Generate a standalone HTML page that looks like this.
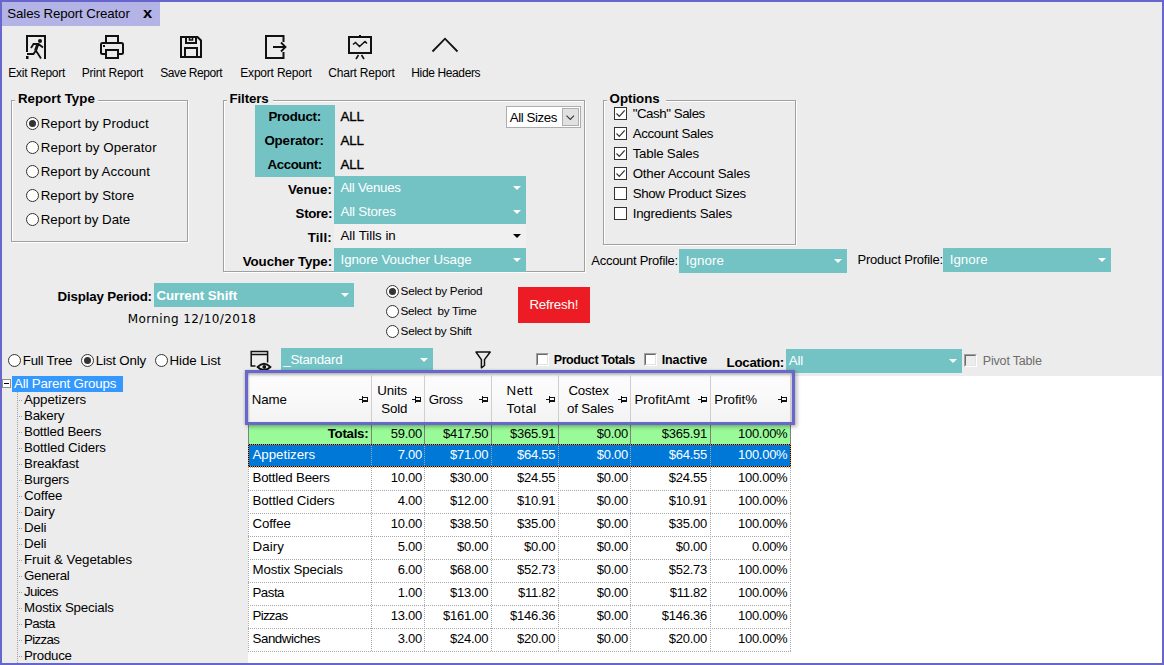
<!DOCTYPE html>
<html><head><meta charset="utf-8"><title>Sales Report Creator</title>
<style>
*{box-sizing:border-box;margin:0;padding:0}
html,body{width:1164px;height:665px;overflow:hidden;background:#ececec}
body{font-family:"Liberation Sans",sans-serif;font-size:13.3px;color:#000;position:relative}
.a{position:absolute;white-space:nowrap}
.t{position:absolute;white-space:nowrap;line-height:16px;height:16px}
.b{font-weight:bold}
.w{color:#fff}
.teal{background:#73c3c5}
.gbw{position:absolute;border:1px solid #fff}
.gb{position:absolute;border:1px solid #a0a0a0}
.lg{position:absolute;background:#ececec;height:16px}
.rd{position:absolute;width:13px;height:13px;border:1px solid #333;border-radius:50%;background:#fff}
.rd.on::after{content:"";position:absolute;left:2px;top:2px;width:7px;height:7px;border-radius:50%;background:#333}
.cb{position:absolute;width:13px;height:13px;border:1px solid #333;background:#fff}
.dd{position:absolute;background:#73c3c5}
.dd.k{background:#f0f0f0}
.ar{position:absolute;width:0;height:0;border-left:4px solid transparent;border-right:4px solid transparent;border-top:4px solid #fff}
.ar.k{border-top-color:#000}
.hl{height:0;border-top:1px dotted #a8a8a8}
.vl{width:0;border-left:1px dotted #a8a8a8}
</style></head><body>
<div class="a" style="left:2px;top:2px;width:158px;height:24px;background:#b3b3e6"></div>
<div class="t" style="left:7.3px;top:6px;letter-spacing:-0.125px;">Sales Report Creator</div>
<div class="t b" style="left:142.7px;top:5px;font-size:14px;letter-spacing:-0.270px;transform:scaleX(1.18);transform-origin:0 0;">x</div>
<svg class="a" style="left:0;top:28px" width="500" height="40" viewBox="0 28 500 40" fill="none" stroke="#111" stroke-width="2">
<path d="M27 52V36H45V59"/><path d="M26 57.500H28.500" stroke-width="3"/>
<circle cx="40" cy="41" r="2" fill="#111" stroke="none"/>
<path d="M31 48L33.500 44H38.500L43 47.500M38.500 44L36 51L37.500 53L41 58.500M35.500 51L33.500 54H27" stroke-width="1.8"/><path d="M37 44.500L34.800 50.500" stroke-width="1.6"/>
<path d="M106 42V36H118V42M106 54H102.500Q101 54 101 52.500V44.500Q101 43 102.500 43H121.500Q123 43 123 44.500V52.500Q123 54 121.500 54H118"/>
<rect x="106" y="50" width="12" height="8"/>
<rect x="103" y="45" width="2" height="2" fill="#111" stroke="none"/>
<path d="M181 37H197.500L201 40.500V57H181Z"/>
<path d="M186 37V43H196V37"/><path d="M189.500 37V40H192.500V37" stroke-width="1.6"/>
<path d="M185 57V48H197V57"/>
<path d="M283.500 42V36H266V58H283.500V52"/>
<path d="M273 47H285M281 42.500L285.500 47L281 51.500" stroke-width="1.8"/>
<rect x="349" y="37" width="22" height="16"/>
<path d="M360 35V37" /><path d="M358.500 55L356 59M361.500 55L364 59" stroke-width="1.6"/>
<path d="M353 44.500L355.500 42.500L359.500 46.500L365 41.500L367 43.500" stroke-width="1.6"/>
<path d="M432.500 51.500L445 38.700L457.500 51.500" stroke-width="1.8"/>
</svg>
<div class="t" style="left:8.3px;top:65px;font-size:12px;letter-spacing:-0.224px;">Exit Report</div>
<div class="t" style="left:81.8px;top:65px;font-size:12px;letter-spacing:-0.219px;">Print Report</div>
<div class="t" style="left:160.3px;top:65px;font-size:12px;letter-spacing:-0.437px;">Save Report</div>
<div class="t" style="left:240.3px;top:65px;font-size:12px;letter-spacing:-0.204px;">Export Report</div>
<div class="t" style="left:328.3px;top:65px;font-size:12px;letter-spacing:-0.192px;">Chart Report</div>
<div class="t" style="left:411.3px;top:65px;font-size:12px;letter-spacing:-0.373px;">Hide Headers</div>
<div class="gbw" style="left:12px;top:101px;width:177px;height:142px"></div>
<div class="gb" style="left:11px;top:100px;width:177px;height:142px"></div>
<div class="lg" style="left:15px;top:94px;width:83px"></div>
<div class="t b" style="left:17.9px;top:91px;letter-spacing:0.037px;">Report Type</div>
<div class="rd on" style="left:26px;top:117px"></div>
<div class="t" style="left:40.7px;top:116px;letter-spacing:0.049px;">Report by Product</div>
<div class="rd" style="left:26px;top:141px"></div>
<div class="t" style="left:40.7px;top:140px;letter-spacing:0.121px;">Report by Operator</div>
<div class="rd" style="left:26px;top:165px"></div>
<div class="t" style="left:40.7px;top:164px;letter-spacing:0.032px;">Report by Account</div>
<div class="rd" style="left:26px;top:189px"></div>
<div class="t" style="left:40.7px;top:188px;letter-spacing:0.018px;">Report by Store</div>
<div class="rd" style="left:26px;top:213px"></div>
<div class="t" style="left:40.7px;top:212px;">Report by Date</div>
<div class="gbw" style="left:224px;top:101px;width:362px;height:172px"></div>
<div class="gb" style="left:223px;top:100px;width:362px;height:172px"></div>
<div class="lg" style="left:227px;top:94px;width:46px"></div>
<div class="t b" style="left:229.6px;top:91px;letter-spacing:-0.144px;">Filters</div>
<div class="a teal" style="left:255px;top:105px;width:80px;height:72px"></div>
<div class="t b" style="left:268.4px;top:109px;letter-spacing:-0.284px;">Product:</div>
<div class="t b" style="left:264.4px;top:133px;letter-spacing:-0.122px;">Operator:</div>
<div class="t b" style="left:267.6px;top:157px;letter-spacing:-0.441px;">Account:</div>
<div class="t" style="left:340.5px;top:109px;letter-spacing:-0.191px;-webkit-text-stroke:0.35px #000;">ALL</div>
<div class="t" style="left:340.5px;top:133px;letter-spacing:-0.191px;-webkit-text-stroke:0.35px #000;">ALL</div>
<div class="t" style="left:340.5px;top:157px;letter-spacing:-0.191px;-webkit-text-stroke:0.35px #000;">ALL</div>
<div class="t b" style="left:287.9px;top:182px;letter-spacing:0.082px;">Venue:</div>
<div class="t b" style="left:295.6px;top:206px;letter-spacing:-0.337px;">Store:</div>
<div class="t b" style="left:307.7px;top:230px;letter-spacing:0.179px;">Till:</div>
<div class="t b" style="left:242.8px;top:254px;letter-spacing:-0.092px;">Voucher Type:</div>
<div class="dd" style="left:334px;top:176px;width:192px;height:24px"></div>
<div class="ar" style="left:512.5px;top:186px"></div>
<div class="t w" style="left:340.5px;top:180px;letter-spacing:-0.264px;">All Venues</div>
<div class="dd" style="left:334px;top:200px;width:192px;height:24px"></div>
<div class="ar" style="left:512.5px;top:210px"></div>
<div class="t w" style="left:340.5px;top:204px;letter-spacing:-0.171px;">All Stores</div>
<div class="dd k" style="left:334px;top:224px;width:192px;height:24px"></div>
<div class="ar k" style="left:512.5px;top:234px"></div>
<div class="t" style="left:340.5px;top:228px;letter-spacing:-0.018px;">All Tills in</div>
<div class="dd" style="left:334px;top:248px;width:192px;height:24px"></div>
<div class="ar" style="left:512.5px;top:258px"></div>
<div class="t w" style="left:340.5px;top:252px;letter-spacing:-0.061px;">Ignore Voucher Usage</div>
<div class="a" style="left:506px;top:106px;width:75px;height:22px;background:#fff;border:1px solid #adadad"></div>
<div class="a" style="left:562px;top:108px;width:17px;height:18px;background:#e1e1e1;border:1px solid #adadad"></div>
<svg class="a" style="left:562px;top:108px" width="17" height="18" viewBox="562 108 17 18"><path d="M566.500 115.700L570.300 119.400L574 115.700" fill="none" stroke="#333" stroke-width="1.1"/></svg>
<div class="t" style="left:509.7px;top:110px;letter-spacing:-0.422px;">All Sizes</div>
<div class="gbw" style="left:604px;top:101px;width:193px;height:145px"></div>
<div class="gb" style="left:603px;top:100px;width:193px;height:145px"></div>
<div class="lg" style="left:607px;top:94px;width:59px"></div>
<div class="t b" style="left:609.6px;top:91px;letter-spacing:-0.019px;">Options</div>
<div class="cb" style="left:614px;top:107px;width:13px;height:13px;border-color:#333"></div>
<svg class="a" style="left:614px;top:107px" width="13" height="13" viewBox="0 0 13 13"><path d="M2.500 6.500L5.300 9.300L10.700 3.300" fill="none" stroke="#333" stroke-width="1.2"/></svg>
<div class="t" style="left:632.7px;top:106px;letter-spacing:-0.445px;">"Cash" Sales</div>
<div class="cb" style="left:614px;top:127px;width:13px;height:13px;border-color:#333"></div>
<svg class="a" style="left:614px;top:127px" width="13" height="13" viewBox="0 0 13 13"><path d="M2.500 6.500L5.300 9.300L10.700 3.300" fill="none" stroke="#333" stroke-width="1.2"/></svg>
<div class="t" style="left:632.7px;top:126px;letter-spacing:-0.363px;">Account Sales</div>
<div class="cb" style="left:614px;top:147px;width:13px;height:13px;border-color:#333"></div>
<svg class="a" style="left:614px;top:147px" width="13" height="13" viewBox="0 0 13 13"><path d="M2.500 6.500L5.300 9.300L10.700 3.300" fill="none" stroke="#333" stroke-width="1.2"/></svg>
<div class="t" style="left:632.7px;top:146px;letter-spacing:-0.232px;">Table Sales</div>
<div class="cb" style="left:614px;top:167px;width:13px;height:13px;border-color:#333"></div>
<svg class="a" style="left:614px;top:167px" width="13" height="13" viewBox="0 0 13 13"><path d="M2.500 6.500L5.300 9.300L10.700 3.300" fill="none" stroke="#333" stroke-width="1.2"/></svg>
<div class="t" style="left:632.7px;top:166px;letter-spacing:-0.212px;">Other Account Sales</div>
<div class="cb" style="left:614px;top:187px;width:13px;height:13px;border-color:#333"></div>
<div class="t" style="left:632.7px;top:186px;letter-spacing:-0.328px;">Show Product Sizes</div>
<div class="cb" style="left:614px;top:207px;width:13px;height:13px;border-color:#333"></div>
<div class="t" style="left:632.7px;top:206px;letter-spacing:-0.209px;">Ingredients Sales</div>
<div class="t" style="left:591.3px;top:253px;font-size:13px;letter-spacing:-0.278px;">Account Profile:</div>
<div class="dd" style="left:679px;top:249px;width:168px;height:24px"></div><div class="ar" style="left:834px;top:259px"></div>
<div class="t w" style="left:685.7px;top:253px;letter-spacing:0.099px;">Ignore</div>
<div class="t" style="left:857.5px;top:252px;font-size:13px;letter-spacing:-0.217px;">Product Profile:</div>
<div class="dd" style="left:943px;top:248px;width:168px;height:24px"></div><div class="ar" style="left:1098px;top:258px"></div>
<div class="t w" style="left:949.7px;top:252px;letter-spacing:0.049px;">Ignore</div>
<div class="t b" style="left:57.5px;top:289px;letter-spacing:-0.161px;">Display Period:</div>
<div class="dd" style="left:154px;top:283px;width:200px;height:24px"></div><div class="ar" style="left:341px;top:293px"></div>
<div class="t b w" style="left:156.5px;top:288px;letter-spacing:-0.051px;">Current Shift</div>
<div class="t" style="left:127.7px;top:311px;font-size:12px;font-family:'DejaVu Sans','Liberation Sans',sans-serif;letter-spacing:0.391px;">Morning 12/10/2018</div>
<div class="rd on" style="left:386px;top:285px"></div>
<div class="t" style="left:400.6px;top:283px;font-size:11.7px;letter-spacing:-0.207px;">Select by Period</div>
<div class="rd" style="left:386px;top:305px"></div>
<div class="t" style="left:400.6px;top:303px;font-size:11.7px;letter-spacing:-0.267px;">Select  by Time</div>
<div class="rd" style="left:386px;top:325px"></div>
<div class="t" style="left:400.6px;top:323px;font-size:11.7px;letter-spacing:-0.255px;">Select by Shift</div>
<div class="a" style="left:518px;top:287px;width:72px;height:36px;background:#ed1c24"></div>
<div class="t w" style="left:529.4px;top:297px;letter-spacing:-0.171px;">Refresh!</div>
<div class="rd" style="left:8px;top:354px"></div>
<div class="t" style="left:22.8px;top:353px;letter-spacing:-0.259px;">Full Tree</div>
<div class="rd on" style="left:81px;top:354px"></div>
<div class="t" style="left:95.8px;top:353px;letter-spacing:-0.182px;">List Only</div>
<div class="rd" style="left:155px;top:354px"></div>
<div class="t" style="left:169.5px;top:353px;letter-spacing:-0.059px;">Hide List</div>
<svg class="a" style="left:248px;top:348px" width="28" height="26" viewBox="248 348 28 26" fill="none" stroke="#111">
<path d="M255.500 366H251.200V351.600H267.600V362.600M251.200 354.500H267.600" stroke-width="1.5"/>
<path d="M257.600 367Q264 360.600 270.400 367Q264 373.400 257.600 367Z" stroke-width="1.8"/><circle cx="264.300" cy="367" r="1.900" fill="#111" stroke="none"/>
</svg>
<div class="dd" style="left:281px;top:348px;width:152px;height:23px"></div><div class="ar" style="left:420px;top:358px"></div>
<div class="t w" style="left:283.3px;top:352px;letter-spacing:-0.264px;">_Standard</div>
<svg class="a" style="left:472px;top:348px" width="24" height="24" viewBox="472 348 24 24" fill="none" stroke="#111" stroke-width="1.5">
<path d="M476 352H490.200L484.500 359.600V365.500L481.400 367.800V359.600Z" stroke-linejoin="round"/></svg>
<div class="a" style="left:536px;top:353px;width:13px;height:13px;background:#fff;border-top:1px solid #a0a0a0;border-left:1px solid #a0a0a0;border-right:1px solid #fff;border-bottom:1px solid #fff"></div>
<div class="a" style="left:537px;top:354px;width:11px;height:11px;border-top:1px solid #696969;border-left:1px solid #696969;border-right:1px solid #e3e3e3;border-bottom:1px solid #e3e3e3"></div>
<div class="t b" style="left:553.7px;top:352px;font-size:12.5px;letter-spacing:-0.392px;">Product Totals</div>
<div class="a" style="left:644px;top:353px;width:13px;height:13px;background:#fff;border-top:1px solid #a0a0a0;border-left:1px solid #a0a0a0;border-right:1px solid #fff;border-bottom:1px solid #fff"></div>
<div class="a" style="left:645px;top:354px;width:11px;height:11px;border-top:1px solid #696969;border-left:1px solid #696969;border-right:1px solid #e3e3e3;border-bottom:1px solid #e3e3e3"></div>
<div class="t b" style="left:661.8px;top:352px;font-size:12.5px;letter-spacing:-0.158px;">Inactive</div>
<div class="t b" style="left:726.6px;top:355px;letter-spacing:-0.272px;">Location:</div>
<div class="dd" style="left:786px;top:349px;width:176px;height:24px"></div><div class="ar" style="left:949px;top:359px"></div>
<div class="t w" style="left:788.7px;top:353px;letter-spacing:-0.127px;">All</div>
<div class="a" style="left:964px;top:354px;width:13px;height:13px;background:#ececec;border-top:1px solid #a0a0a0;border-left:1px solid #a0a0a0;border-right:1px solid #fff;border-bottom:1px solid #fff"></div>
<div class="a" style="left:965px;top:355px;width:11px;height:11px;border-top:1px solid #696969;border-left:1px solid #696969;border-right:1px solid #e3e3e3;border-bottom:1px solid #e3e3e3"></div>
<div class="t" style="left:982.8px;top:353px;font-size:12.5px;letter-spacing:-0.184px;color:#6d6d6d">Pivot Table</div>
<div class="a" style="left:12px;top:376px;width:111px;height:16px;background:#3399ff"></div>
<div class="t w" style="left:14.0px;top:376px;letter-spacing:-0.162px;">All Parent Groups</div>
<div class="a" style="left:2px;top:379px;width:9px;height:9px;border:1px solid #919191;background:#fff"></div>
<div class="a" style="left:4px;top:383px;width:5px;height:1px;background:#000"></div>
<div class="a" style="left:17px;top:392px;width:1px;height:272px;background:repeating-linear-gradient(#a0a0a0 0 1px,transparent 1px 2px)"></div>
<div class="a" style="left:19px;top:400px;width:4px;height:1px;background:repeating-linear-gradient(90deg,#a0a0a0 0 1px,transparent 1px 2px)"></div>
<div class="t" style="left:24.0px;top:392px;letter-spacing:-0.073px;">Appetizers</div>
<div class="a" style="left:19px;top:416px;width:4px;height:1px;background:repeating-linear-gradient(90deg,#a0a0a0 0 1px,transparent 1px 2px)"></div>
<div class="t" style="left:24.0px;top:408px;letter-spacing:-0.215px;">Bakery</div>
<div class="a" style="left:19px;top:432px;width:4px;height:1px;background:repeating-linear-gradient(90deg,#a0a0a0 0 1px,transparent 1px 2px)"></div>
<div class="t" style="left:24.0px;top:424px;letter-spacing:-0.210px;">Bottled Beers</div>
<div class="a" style="left:19px;top:448px;width:4px;height:1px;background:repeating-linear-gradient(90deg,#a0a0a0 0 1px,transparent 1px 2px)"></div>
<div class="t" style="left:24.0px;top:440px;letter-spacing:-0.123px;">Bottled Ciders</div>
<div class="a" style="left:19px;top:464px;width:4px;height:1px;background:repeating-linear-gradient(90deg,#a0a0a0 0 1px,transparent 1px 2px)"></div>
<div class="t" style="left:24.0px;top:456px;letter-spacing:-0.152px;">Breakfast</div>
<div class="a" style="left:19px;top:480px;width:4px;height:1px;background:repeating-linear-gradient(90deg,#a0a0a0 0 1px,transparent 1px 2px)"></div>
<div class="t" style="left:24.0px;top:472px;letter-spacing:-0.223px;">Burgers</div>
<div class="a" style="left:19px;top:496px;width:4px;height:1px;background:repeating-linear-gradient(90deg,#a0a0a0 0 1px,transparent 1px 2px)"></div>
<div class="t" style="left:24.0px;top:488px;letter-spacing:-0.090px;">Coffee</div>
<div class="a" style="left:19px;top:512px;width:4px;height:1px;background:repeating-linear-gradient(90deg,#a0a0a0 0 1px,transparent 1px 2px)"></div>
<div class="t" style="left:24.0px;top:504px;letter-spacing:-0.046px;">Dairy</div>
<div class="a" style="left:19px;top:528px;width:4px;height:1px;background:repeating-linear-gradient(90deg,#a0a0a0 0 1px,transparent 1px 2px)"></div>
<div class="t" style="left:24.0px;top:520px;letter-spacing:-0.127px;">Deli</div>
<div class="a" style="left:19px;top:544px;width:4px;height:1px;background:repeating-linear-gradient(90deg,#a0a0a0 0 1px,transparent 1px 2px)"></div>
<div class="t" style="left:24.0px;top:536px;letter-spacing:-0.127px;">Deli</div>
<div class="a" style="left:19px;top:560px;width:4px;height:1px;background:repeating-linear-gradient(90deg,#a0a0a0 0 1px,transparent 1px 2px)"></div>
<div class="t" style="left:24.0px;top:552px;letter-spacing:-0.036px;">Fruit &amp; Vegetables</div>
<div class="a" style="left:19px;top:576px;width:4px;height:1px;background:repeating-linear-gradient(90deg,#a0a0a0 0 1px,transparent 1px 2px)"></div>
<div class="t" style="left:24.0px;top:568px;letter-spacing:-0.259px;">General</div>
<div class="a" style="left:19px;top:592px;width:4px;height:1px;background:repeating-linear-gradient(90deg,#a0a0a0 0 1px,transparent 1px 2px)"></div>
<div class="t" style="left:24.0px;top:584px;letter-spacing:-0.634px;">Juices</div>
<div class="a" style="left:19px;top:608px;width:4px;height:1px;background:repeating-linear-gradient(90deg,#a0a0a0 0 1px,transparent 1px 2px)"></div>
<div class="t" style="left:24.0px;top:600px;letter-spacing:-0.172px;">Mostix Specials</div>
<div class="a" style="left:19px;top:624px;width:4px;height:1px;background:repeating-linear-gradient(90deg,#a0a0a0 0 1px,transparent 1px 2px)"></div>
<div class="t" style="left:24.0px;top:616px;letter-spacing:-0.643px;">Pasta</div>
<div class="a" style="left:19px;top:640px;width:4px;height:1px;background:repeating-linear-gradient(90deg,#a0a0a0 0 1px,transparent 1px 2px)"></div>
<div class="t" style="left:24.0px;top:632px;letter-spacing:-0.645px;">Pizzas</div>
<div class="a" style="left:19px;top:656px;width:4px;height:1px;background:repeating-linear-gradient(90deg,#a0a0a0 0 1px,transparent 1px 2px)"></div>
<div class="t" style="left:24.0px;top:648px;letter-spacing:-0.262px;">Produce</div>
<div class="a" style="left:248px;top:376px;width:914px;height:287px;background:#fff"></div>
<div class="a" style="left:248px;top:425px;width:543px;height:19px;background:#98fb98"></div>
<div class="a" style="left:248px;top:444px;width:543px;height:23px;background:#0078d7"></div>
<div class="a hl" style="left:248px;top:467px;width:543px"></div>
<div class="a hl" style="left:248px;top:490px;width:543px"></div>
<div class="a hl" style="left:248px;top:513px;width:543px"></div>
<div class="a hl" style="left:248px;top:536px;width:543px"></div>
<div class="a hl" style="left:248px;top:559px;width:543px"></div>
<div class="a hl" style="left:248px;top:582px;width:543px"></div>
<div class="a hl" style="left:248px;top:605px;width:543px"></div>
<div class="a hl" style="left:248px;top:628px;width:543px"></div>
<div class="a hl" style="left:248px;top:651px;width:543px"></div>
<div class="a vl" style="left:371px;top:444px;height:207px"></div>
<div class="a" style="left:371px;top:425px;width:1px;height:19px;background:#808080"></div>
<div class="a vl" style="left:424px;top:444px;height:207px"></div>
<div class="a" style="left:424px;top:425px;width:1px;height:19px;background:#808080"></div>
<div class="a vl" style="left:491px;top:444px;height:207px"></div>
<div class="a" style="left:491px;top:425px;width:1px;height:19px;background:#808080"></div>
<div class="a vl" style="left:558px;top:444px;height:207px"></div>
<div class="a" style="left:558px;top:425px;width:1px;height:19px;background:#808080"></div>
<div class="a vl" style="left:630px;top:444px;height:207px"></div>
<div class="a" style="left:630px;top:425px;width:1px;height:19px;background:#808080"></div>
<div class="a vl" style="left:710px;top:444px;height:207px"></div>
<div class="a" style="left:710px;top:425px;width:1px;height:19px;background:#808080"></div>
<div class="a vl" style="left:790px;top:444px;height:207px"></div>
<div class="a" style="left:790px;top:425px;width:1px;height:19px;background:#808080"></div>
<div class="a" style="left:248px;top:444px;width:543px;height:1px;background:repeating-linear-gradient(90deg,#ff8728 0 1px,#000 1px 2px)"></div>
<div class="a" style="left:248px;top:466px;width:543px;height:1px;background:repeating-linear-gradient(90deg,#ff8728 0 1px,#000 1px 2px)"></div>
<div class="a" style="left:248px;top:444px;width:1px;height:23px;background:repeating-linear-gradient(#ff8728 0 1px,#000 1px 2px)"></div>
<div class="a" style="left:790px;top:444px;width:1px;height:23px;background:repeating-linear-gradient(#ff8728 0 1px,#000 1px 2px)"></div>
<div class="a" style="left:248px;top:425px;width:1px;height:19px;background:#808080"></div>
<div class="a vl" style="left:248px;top:467px;height:185px"></div>
<div class="t b" style="right:795.6px;top:426px;letter-spacing:-0.270px;">Totals:</div>
<div class="t" style="right:742.0px;top:426px;font-size:13px;letter-spacing:-0.270px;">59.00</div>
<div class="t" style="right:675.8px;top:426px;font-size:13px;letter-spacing:-0.270px;">$417.50</div>
<div class="t" style="right:608.8px;top:426px;font-size:13px;letter-spacing:-0.270px;">$365.91</div>
<div class="t" style="right:536.1px;top:426px;font-size:13px;letter-spacing:-0.270px;">$0.00</div>
<div class="t" style="right:457.1px;top:426px;font-size:13px;letter-spacing:-0.270px;">$365.91</div>
<div class="t" style="right:376.6px;top:426px;font-size:13px;letter-spacing:-0.270px;">100.00%</div>
<div class="t w" style="left:252.5px;top:447px;letter-spacing:-0.023px;">Appetizers</div>
<div class="t w" style="right:742.0px;top:447px;font-size:13px;letter-spacing:-0.270px;">7.00</div>
<div class="t w" style="right:675.8px;top:447px;font-size:13px;letter-spacing:-0.270px;">$71.00</div>
<div class="t w" style="right:608.8px;top:447px;font-size:13px;letter-spacing:-0.270px;">$64.55</div>
<div class="t w" style="right:536.1px;top:447px;font-size:13px;letter-spacing:-0.270px;">$0.00</div>
<div class="t w" style="right:457.1px;top:447px;font-size:13px;letter-spacing:-0.270px;">$64.55</div>
<div class="t w" style="right:376.6px;top:447px;font-size:13px;letter-spacing:-0.270px;">100.00%</div>
<div class="t" style="left:252.5px;top:470px;letter-spacing:-0.202px;">Bottled Beers</div>
<div class="t" style="right:742.0px;top:470px;font-size:13px;letter-spacing:-0.270px;">10.00</div>
<div class="t" style="right:675.8px;top:470px;font-size:13px;letter-spacing:-0.270px;">$30.00</div>
<div class="t" style="right:608.8px;top:470px;font-size:13px;letter-spacing:-0.270px;">$24.55</div>
<div class="t" style="right:536.1px;top:470px;font-size:13px;letter-spacing:-0.270px;">$0.00</div>
<div class="t" style="right:457.1px;top:470px;font-size:13px;letter-spacing:-0.270px;">$24.55</div>
<div class="t" style="right:376.6px;top:470px;font-size:13px;letter-spacing:-0.270px;">100.00%</div>
<div class="t" style="left:252.5px;top:493px;letter-spacing:-0.101px;">Bottled Ciders</div>
<div class="t" style="right:742.0px;top:493px;font-size:13px;letter-spacing:-0.270px;">4.00</div>
<div class="t" style="right:675.8px;top:493px;font-size:13px;letter-spacing:-0.270px;">$12.00</div>
<div class="t" style="right:608.8px;top:493px;font-size:13px;letter-spacing:-0.270px;">$10.91</div>
<div class="t" style="right:536.1px;top:493px;font-size:13px;letter-spacing:-0.270px;">$0.00</div>
<div class="t" style="right:457.1px;top:493px;font-size:13px;letter-spacing:-0.270px;">$10.91</div>
<div class="t" style="right:376.6px;top:493px;font-size:13px;letter-spacing:-0.270px;">100.00%</div>
<div class="t" style="left:252.5px;top:516px;letter-spacing:-0.123px;">Coffee</div>
<div class="t" style="right:742.0px;top:516px;font-size:13px;letter-spacing:-0.270px;">10.00</div>
<div class="t" style="right:675.8px;top:516px;font-size:13px;letter-spacing:-0.270px;">$38.50</div>
<div class="t" style="right:608.8px;top:516px;font-size:13px;letter-spacing:-0.270px;">$35.00</div>
<div class="t" style="right:536.1px;top:516px;font-size:13px;letter-spacing:-0.270px;">$0.00</div>
<div class="t" style="right:457.1px;top:516px;font-size:13px;letter-spacing:-0.270px;">$35.00</div>
<div class="t" style="right:376.6px;top:516px;font-size:13px;letter-spacing:-0.270px;">100.00%</div>
<div class="t" style="left:252.5px;top:539px;letter-spacing:0.094px;">Dairy</div>
<div class="t" style="right:742.0px;top:539px;font-size:13px;letter-spacing:-0.270px;">5.00</div>
<div class="t" style="right:675.8px;top:539px;font-size:13px;letter-spacing:-0.270px;">$0.00</div>
<div class="t" style="right:608.8px;top:539px;font-size:13px;letter-spacing:-0.270px;">$0.00</div>
<div class="t" style="right:536.1px;top:539px;font-size:13px;letter-spacing:-0.270px;">$0.00</div>
<div class="t" style="right:457.1px;top:539px;font-size:13px;letter-spacing:-0.270px;">$0.00</div>
<div class="t" style="right:376.6px;top:539px;font-size:13px;letter-spacing:-0.270px;">0.00%</div>
<div class="t" style="left:252.5px;top:562px;letter-spacing:-0.145px;">Mostix Specials</div>
<div class="t" style="right:742.0px;top:562px;font-size:13px;letter-spacing:-0.270px;">6.00</div>
<div class="t" style="right:675.8px;top:562px;font-size:13px;letter-spacing:-0.270px;">$68.00</div>
<div class="t" style="right:608.8px;top:562px;font-size:13px;letter-spacing:-0.270px;">$52.73</div>
<div class="t" style="right:536.1px;top:562px;font-size:13px;letter-spacing:-0.270px;">$0.00</div>
<div class="t" style="right:457.1px;top:562px;font-size:13px;letter-spacing:-0.270px;">$52.73</div>
<div class="t" style="right:376.6px;top:562px;font-size:13px;letter-spacing:-0.270px;">100.00%</div>
<div class="t" style="left:252.5px;top:585px;letter-spacing:-0.503px;">Pasta</div>
<div class="t" style="right:742.0px;top:585px;font-size:13px;letter-spacing:-0.270px;">1.00</div>
<div class="t" style="right:675.8px;top:585px;font-size:13px;letter-spacing:-0.270px;">$13.00</div>
<div class="t" style="right:608.8px;top:585px;font-size:13px;letter-spacing:-0.270px;">$11.82</div>
<div class="t" style="right:536.1px;top:585px;font-size:13px;letter-spacing:-0.270px;">$0.00</div>
<div class="t" style="right:457.1px;top:585px;font-size:13px;letter-spacing:-0.270px;">$11.82</div>
<div class="t" style="right:376.6px;top:585px;font-size:13px;letter-spacing:-0.270px;">100.00%</div>
<div class="t" style="left:252.5px;top:608px;letter-spacing:-0.712px;">Pizzas</div>
<div class="t" style="right:742.0px;top:608px;font-size:13px;letter-spacing:-0.270px;">13.00</div>
<div class="t" style="right:675.8px;top:608px;font-size:13px;letter-spacing:-0.270px;">$161.00</div>
<div class="t" style="right:608.8px;top:608px;font-size:13px;letter-spacing:-0.270px;">$146.36</div>
<div class="t" style="right:536.1px;top:608px;font-size:13px;letter-spacing:-0.270px;">$0.00</div>
<div class="t" style="right:457.1px;top:608px;font-size:13px;letter-spacing:-0.270px;">$146.36</div>
<div class="t" style="right:376.6px;top:608px;font-size:13px;letter-spacing:-0.270px;">100.00%</div>
<div class="t" style="left:252.5px;top:631px;letter-spacing:-0.430px;">Sandwiches</div>
<div class="t" style="right:742.0px;top:631px;font-size:13px;letter-spacing:-0.270px;">3.00</div>
<div class="t" style="right:675.8px;top:631px;font-size:13px;letter-spacing:-0.270px;">$24.00</div>
<div class="t" style="right:608.8px;top:631px;font-size:13px;letter-spacing:-0.270px;">$20.00</div>
<div class="t" style="right:536.1px;top:631px;font-size:13px;letter-spacing:-0.270px;">$0.00</div>
<div class="t" style="right:457.1px;top:631px;font-size:13px;letter-spacing:-0.270px;">$20.00</div>
<div class="t" style="right:376.6px;top:631px;font-size:13px;letter-spacing:-0.270px;">100.00%</div>
<div class="a" style="left:245px;top:370px;width:550px;height:55px;border:3px solid #6767cc;background:linear-gradient(#fcfcfc 0,#fafafa 40%,#f3f3f3 100%);background-clip:padding-box;box-shadow:inset 0 3px 3px -1px rgba(0,0,0,.28),inset -2px 0 2px -1px rgba(0,0,0,.18),inset 2px 0 2px -1px rgba(0,0,0,.18),2px 2px 4px rgba(0,0,0,.28),-1px 0 2px rgba(0,0,0,.12)"></div>
<div class="a" style="left:371px;top:375px;width:1px;height:47px;background:#cfcfcf"></div>
<div class="a" style="left:424px;top:375px;width:1px;height:47px;background:#cfcfcf"></div>
<div class="a" style="left:491px;top:375px;width:1px;height:47px;background:#cfcfcf"></div>
<div class="a" style="left:558px;top:375px;width:1px;height:47px;background:#cfcfcf"></div>
<div class="a" style="left:630px;top:375px;width:1px;height:47px;background:#cfcfcf"></div>
<div class="a" style="left:710px;top:375px;width:1px;height:47px;background:#cfcfcf"></div>
<div class="a" style="left:790px;top:375px;width:1px;height:47px;background:#cfcfcf"></div>
<div class="t" style="left:251.8px;top:392px;letter-spacing:-0.146px;">Name</div>
<svg class="a" style="left:359px;top:396px" width="9" height="7" viewBox="0 0 9 7" shape-rendering="crispEdges" fill="#111"><rect x="0" y="3" width="3" height="1"/><rect x="3" y="0" width="1" height="7"/><rect x="4" y="1" width="5" height="1"/><rect x="8" y="1" width="1" height="5"/><rect x="4" y="4" width="5" height="2"/></svg>
<div class="t" style="left:377.3px;top:383px;letter-spacing:-0.099px;">Units</div>
<div class="t" style="left:381.3px;top:401px;letter-spacing:-0.206px;">Sold</div>
<svg class="a" style="left:412px;top:396px" width="9" height="7" viewBox="0 0 9 7" shape-rendering="crispEdges" fill="#111"><rect x="0" y="3" width="3" height="1"/><rect x="3" y="0" width="1" height="7"/><rect x="4" y="1" width="5" height="1"/><rect x="8" y="1" width="1" height="5"/><rect x="4" y="4" width="5" height="2"/></svg>
<div class="t" style="left:428.7px;top:392px;letter-spacing:-0.334px;">Gross</div>
<svg class="a" style="left:479px;top:396px" width="9" height="7" viewBox="0 0 9 7" shape-rendering="crispEdges" fill="#111"><rect x="0" y="3" width="3" height="1"/><rect x="3" y="0" width="1" height="7"/><rect x="4" y="1" width="5" height="1"/><rect x="8" y="1" width="1" height="5"/><rect x="4" y="4" width="5" height="2"/></svg>
<div class="t" style="left:506.6px;top:383px;letter-spacing:0.452px;">Nett</div>
<div class="t" style="left:506.6px;top:401px;letter-spacing:0.361px;">Total</div>
<svg class="a" style="left:546px;top:396px" width="9" height="7" viewBox="0 0 9 7" shape-rendering="crispEdges" fill="#111"><rect x="0" y="3" width="3" height="1"/><rect x="3" y="0" width="1" height="7"/><rect x="4" y="1" width="5" height="1"/><rect x="8" y="1" width="1" height="5"/><rect x="4" y="4" width="5" height="2"/></svg>
<div class="t" style="left:568.4px;top:383px;letter-spacing:-0.182px;">Costex</div>
<div class="t" style="left:567.1px;top:401px;letter-spacing:-0.181px;">of Sales</div>
<svg class="a" style="left:618px;top:396px" width="9" height="7" viewBox="0 0 9 7" shape-rendering="crispEdges" fill="#111"><rect x="0" y="3" width="3" height="1"/><rect x="3" y="0" width="1" height="7"/><rect x="4" y="1" width="5" height="1"/><rect x="8" y="1" width="1" height="5"/><rect x="4" y="4" width="5" height="2"/></svg>
<div class="t" style="left:634.4px;top:392px;letter-spacing:0.090px;">ProfitAmt</div>
<svg class="a" style="left:698px;top:396px" width="9" height="7" viewBox="0 0 9 7" shape-rendering="crispEdges" fill="#111"><rect x="0" y="3" width="3" height="1"/><rect x="3" y="0" width="1" height="7"/><rect x="4" y="1" width="5" height="1"/><rect x="8" y="1" width="1" height="5"/><rect x="4" y="4" width="5" height="2"/></svg>
<div class="t" style="left:714.3px;top:392px;letter-spacing:-0.023px;">Profit%</div>
<svg class="a" style="left:778px;top:396px" width="9" height="7" viewBox="0 0 9 7" shape-rendering="crispEdges" fill="#111"><rect x="0" y="3" width="3" height="1"/><rect x="3" y="0" width="1" height="7"/><rect x="4" y="1" width="5" height="1"/><rect x="8" y="1" width="1" height="5"/><rect x="4" y="4" width="5" height="2"/></svg>
<div class="a" style="left:0;top:0;width:1164px;height:665px;border:2px solid #6666cc;z-index:50"></div>
</body></html>
